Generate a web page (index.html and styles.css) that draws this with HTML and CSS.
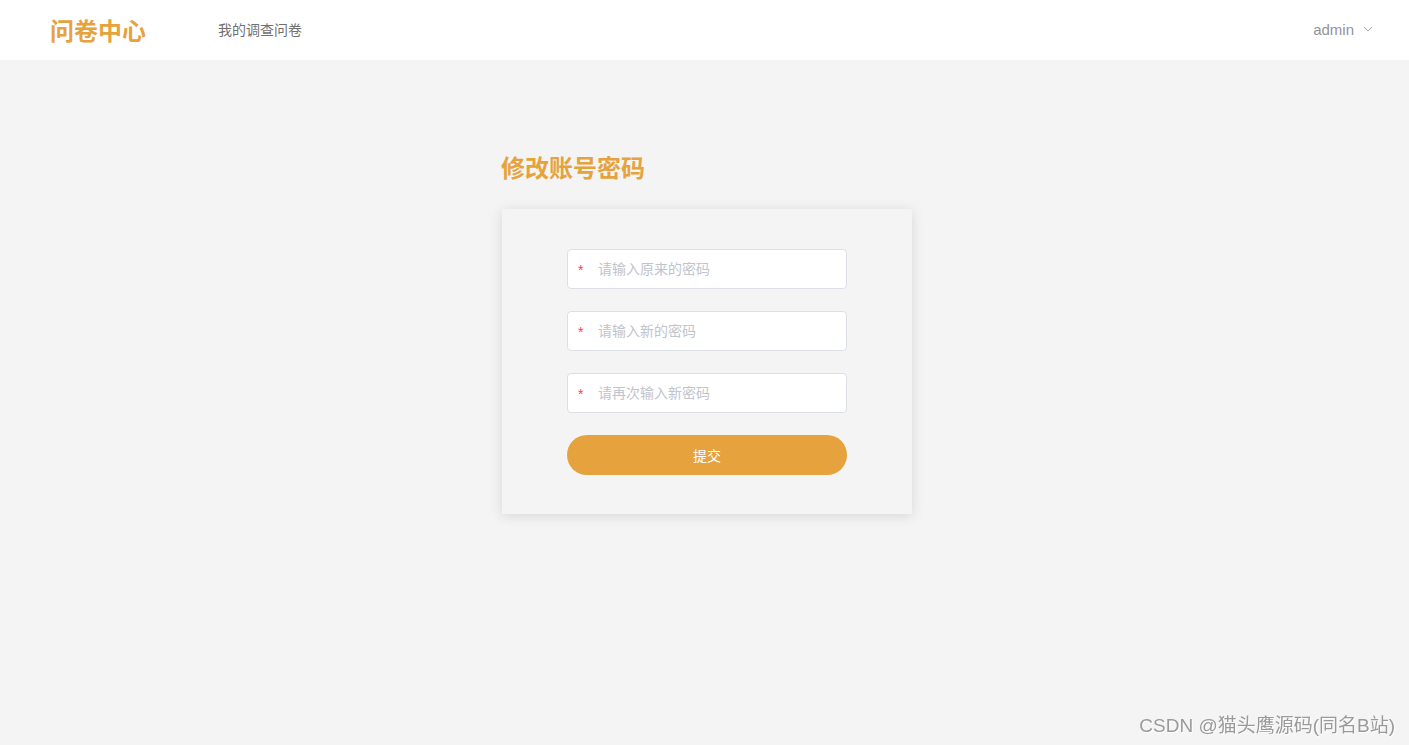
FILE: index.html
```html
<!DOCTYPE html>
<html lang="zh-CN">
<head>
  <meta charset="UTF-8">
  <meta name="viewport" content="width=device-width, initial-scale=1.0">
  <title>修改账号密码</title>
  <link rel="stylesheet" href="styles.css">
</head>
<body>
  <!-- Top bar -->
  <header class="header">
    <div class="logo">问卷中心</div>
    <nav class="nav">
      <a href="#">我的调查问卷</a>
    </nav>
    <div class="user">
      <span>admin</span>
      <svg class="caret" width="10" height="10" viewBox="0 0 10 10">
        <path d="M1 3 L5 7 L9 3" fill="none" stroke="#a8abb2" stroke-width="1"/>
      </svg>
    </div>
  </header>

  <main class="main">
    <div class="panel">
      <h1>修改账号密码</h1>
      <div class="card">
        <form class="pwd-form">
          <div class="field">
            <span class="star">*</span>
            <input type="password" placeholder="请输入原来的密码">
          </div>
          <div class="field">
            <span class="star">*</span>
            <input type="password" placeholder="请输入新的密码">
          </div>
          <div class="field">
            <span class="star">*</span>
            <input type="password" placeholder="请再次输入新密码">
          </div>
          <button type="button">提交</button>
        </form>
      </div>
    </div>
  </main>

  <div class="watermark">CSDN @猫头鹰源码(同名B站)</div>
</body>
</html>
```

FILE: styles.css
```css
/* Basic Reset */
* {
  margin: 0;
  padding: 0;
  box-sizing: border-box;
  font-family: "Liberation Sans", "Noto Sans CJK SC", sans-serif;
}

body {
  background-color: #f4f4f4;
  height: 100vh;
  overflow: hidden;
}

.header {
  height: 60px;
  background-color: #fff;
  display: flex;
  align-items: center;
  padding: 0 36px 2px 50px;
}

.logo {
  font-family: "Noto Sans CJK SC", sans-serif;
  font-size: 24px;
  font-weight: 700;
  color: #e6a23c;
}

.nav {
  margin-left: 72px;
  flex: 1;
}

.nav a {
  font-size: 14px;
  color: #707070;
  text-decoration: none;
}

.user {
  display: flex;
  align-items: center;
  gap: 9px;
  font-size: 15px;
  color: #909399;
}

.main {
  display: flex;
  justify-content: center;
  padding: 91px 0 0 5px;
}

.panel {
  width: 410px;
}

h1 {
  font-family: "Noto Sans CJK SC", sans-serif;
  font-size: 24px;
  font-weight: 700;
  color: #e6a23c;
  line-height: 32px;
  margin: 0 0 26px -1px;
}

.card {
  background-color: #f4f4f4;
  box-shadow: 0 2px 12px rgba(0, 0, 0, 0.12);
  padding: 40px 65px 39px;
}

.pwd-form {
  display: flex;
  flex-direction: column;
  gap: 22px;
}

.field {
  height: 40px;
  background-color: #fff;
  border: 1px solid #dcdfe6;
  border-radius: 4px;
  display: flex;
  align-items: center;
  padding-left: 10px;
}

.star {
  color: #f5425f;
  font-size: 14px;
  width: 20px;
  padding-top: 2px;
}

.field input {
  flex: 1;
  height: 100%;
  border: none;
  outline: none;
  background: transparent;
  font-size: 14px;
  color: #606266;
}

.field input::placeholder {
  color: #c0c4cc;
}

button {
  height: 40px;
  border: none;
  border-radius: 20px;
  background-color: #e6a23c;
  color: #fff;
  font-size: 14px;
  cursor: pointer;
}

.watermark {
  position: fixed;
  right: 14px;
  bottom: 8px;
  font-size: 19px;
  color: #9a9a9a;
  text-shadow: 1px 1px 1px #fff;
}
```
